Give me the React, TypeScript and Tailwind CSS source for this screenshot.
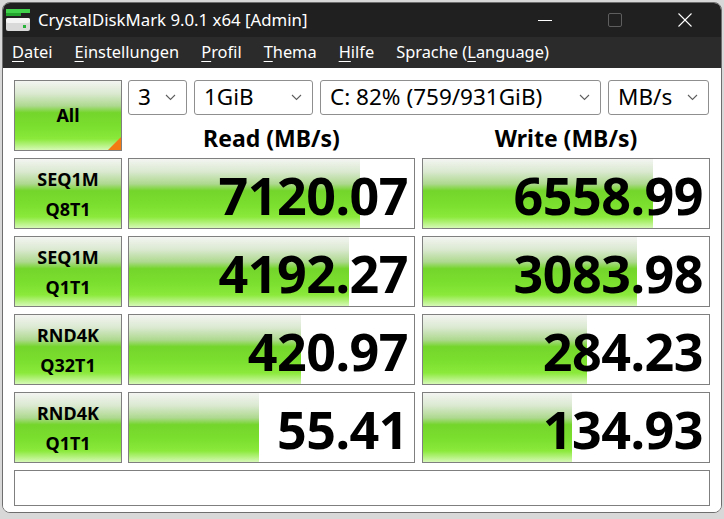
import React from "react";

const GRAD =
  "bg-[linear-gradient(to_bottom,#f3f5f1_0%,#dbe9d1_18%,#aed98f_36%,#74d52b_46%,#7adf2e_66%,#8be93b_84%,#d6f9b6_100%)]";

function Chevron() {
  return (
    <svg width="11" height="7" viewBox="0 0 11 7" className="shrink-0">
      <polyline points="1,1 5.5,5.5 10,1" fill="none" stroke="#5f5f5f" strokeWidth="1.1" />
    </svg>
  );
}

function Combo({ w, text }: { w: string; text: string }) {
  return (
    <div
      className={`${w} h-[35px] flex items-center justify-between pl-[9px] pr-[10px] border border-[#8f8f8f] rounded-[3px] bg-white text-[22.5px] text-black`}
    >
      <span className="leading-none whitespace-nowrap">{text}</span>
      <Chevron />
    </div>
  );
}

function Label({ a, b }: { a: string; b: string }) {
  return (
    <div
      className={`w-[108px] h-[71px] shrink-0 border border-[#7f7f7f] ${GRAD} flex flex-col items-center justify-center font-bold text-[18px] leading-[30px] text-black`}
    >
      <span>{a}</span>
      <span>{b}</span>
    </div>
  );
}

function Bar({ w, fill, value }: { w: string; fill: number; value: string }) {
  return (
    <div className={`${w} h-[71px] shrink-0 border border-[#7f7f7f] bg-white relative overflow-hidden`}>
      <div className={`absolute left-0 top-0 bottom-0 ${GRAD}`} style={{ width: fill }} />
      <div className="relative h-full flex items-center justify-end pr-[6px] pt-[3px] font-bold text-[52px] leading-none tracking-[-0.5px] text-black">
        {value}
      </div>
    </div>
  );
}

function AppIcon() {
  return (
    <svg width="24" height="24" viewBox="0 0 24 24">
      <rect x="0" y="0" width="24" height="4" fill="#3fd24a" />
      <rect x="0" y="4" width="15" height="3" fill="#21a32d" />
      <rect x="0" y="9" width="24" height="13" rx="2" fill="#d9d9d9" />
      <rect x="0" y="9" width="24" height="5" rx="2" fill="#f4f4f4" />
      <rect x="17" y="16" width="3" height="3" fill="#27b23a" />
    </svg>
  );
}

const rows = [
  { a: "SEQ1M", b: "Q8T1", r: "7120.07", rf: 231, w: "6558.99", wf: 230 },
  { a: "SEQ1M", b: "Q1T1", r: "4192.27", rf: 220, w: "3083.98", wf: 214 },
  { a: "RND4K", b: "Q32T1", r: "420.97", rf: 172, w: "284.23", wf: 164 },
  { a: "RND4K", b: "Q1T1", r: "55.41", rf: 130, w: "134.93", wf: 149 },
];

function U({ c }: { c: string }) {
  return <span className="underline underline-offset-[3px] decoration-1">{c}</span>;
}

export default function App() {
  return (
    <div
      className="w-[724px] h-[519px] overflow-hidden bg-[#d8d8d8] pl-[2px] pt-[2px]"
      style={{ fontFamily: '"Noto Sans", "Open Sans", sans-serif' }}
    >
      <div className="w-[720px] h-[511px] rounded-[8px] border border-[#6e6e6e] overflow-hidden flex flex-col bg-white">
        {/* title bar */}
        <div className="h-[34px] shrink-0 bg-[#202020] flex items-center text-white">
          <div className="ml-[3px] mt-[2px]">
            <AppIcon />
          </div>
          <span className="ml-[8px] text-[16.8px]">CrystalDiskMark 9.0.1 x64 [Admin]</span>
          <div className="flex-1" />
          <div className="w-[70px] flex justify-center">
            <svg width="16" height="16" viewBox="0 0 16 16">
              <line x1="1" y1="8.5" x2="15" y2="8.5" stroke="#ffffff" strokeWidth="1" />
            </svg>
          </div>
          <div className="w-[70px] flex justify-center">
            <svg width="16" height="16" viewBox="0 0 16 16">
              <rect x="1.5" y="1.5" width="13" height="13" rx="1.5" fill="none" stroke="#5e5e5e" strokeWidth="1" />
            </svg>
          </div>
          <div className="w-[70px] flex justify-center mr-[1px]">
            <svg width="16" height="16" viewBox="0 0 16 16">
              <line x1="1.5" y1="1.5" x2="14.5" y2="14.5" stroke="#ffffff" strokeWidth="1.1" />
              <line x1="14.5" y1="1.5" x2="1.5" y2="14.5" stroke="#ffffff" strokeWidth="1.1" />
            </svg>
          </div>
        </div>
        {/* menu bar */}
        <div className="h-[31px] shrink-0 bg-[#2b2b2b] flex items-center gap-[22px] pl-[9px] text-white text-[16.4px]">
          <span><U c="D" />atei</span>
          <span><U c="E" />instellungen</span>
          <span><U c="P" />rofil</span>
          <span><U c="T" />hema</span>
          <span><U c="H" />ilfe</span>
          <span>Sprache (<U c="L" />anguage)</span>
        </div>
        {/* content */}
        <div className="flex-1 bg-white pl-[11px] pt-[12px] flex flex-col gap-[7px]">
          <div className="flex h-[71px]">
            <div className={`w-[108px] h-[71px] shrink-0 border border-[#7f7f7f] ${GRAD} relative flex items-center justify-center font-bold text-[18px] text-black`}>
              All
              <div className="absolute right-0 bottom-0 w-0 h-0 border-l-[13px] border-l-transparent border-b-[13px] border-b-[#f47a14]" />
            </div>
            <div className="ml-[6px] flex flex-col">
              <div className="flex gap-[7px]">
                <Combo w="w-[59px]" text="3" />
                <Combo w="w-[119px]" text="1GiB" />
                <Combo w="w-[281px]" text="C: 82% (759/931GiB)" />
                <Combo w="w-[101px]" text="MB/s" />
              </div>
              <div className="flex flex-1 items-center font-bold text-[23px] leading-none text-black">
                <div className="w-[287px] text-center pt-[10px]">Read (MB/s)</div>
                <div className="ml-[7px] w-[288px] text-center pt-[10px]">Write (MB/s)</div>
              </div>
            </div>
          </div>
          {rows.map((r) => (
            <div key={r.a + r.b} className="flex">
              <Label a={r.a} b={r.b} />
              <div className="ml-[6px]">
                <Bar w="w-[287px]" fill={r.rf} value={r.r} />
              </div>
              <div className="ml-[7px]">
                <Bar w="w-[288px]" fill={r.wf} value={r.w} />
              </div>
            </div>
          ))}
          <div className="w-[696px] h-[36px] border border-[#7f7f7f] bg-white" />
        </div>
      </div>
    </div>
  );
}
